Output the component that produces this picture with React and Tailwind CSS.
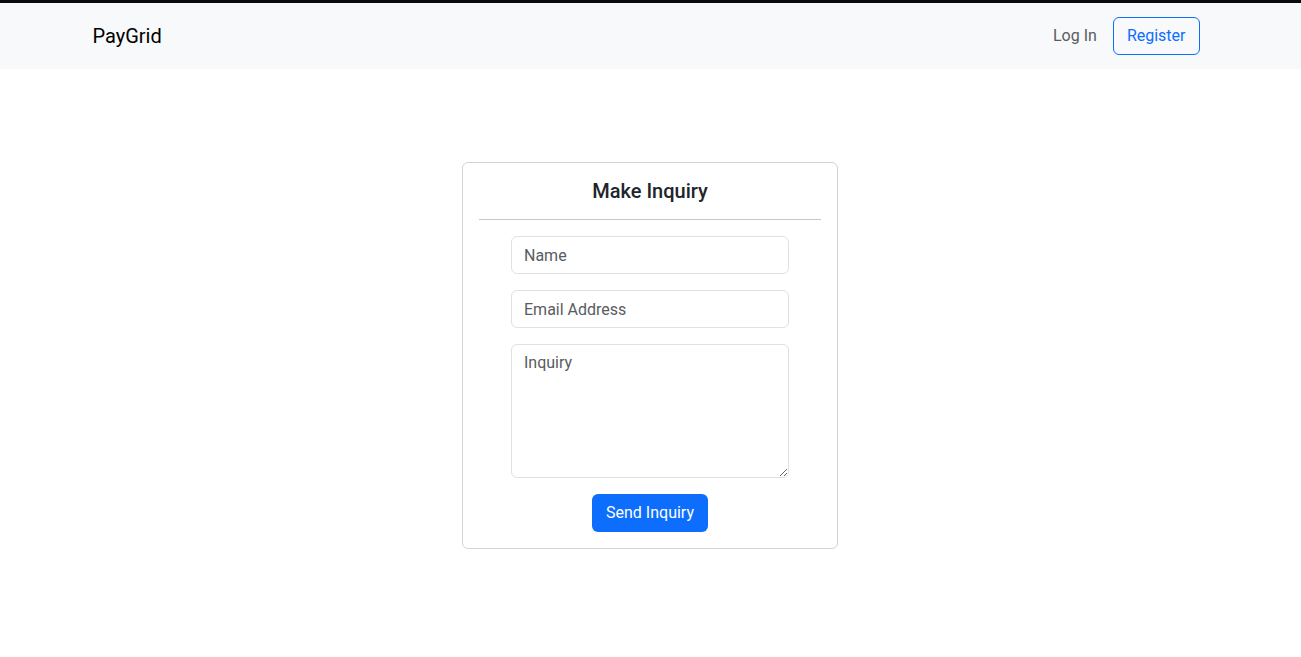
import React, { useState } from 'react';

const App = () => {
  const [form, setForm] = useState({ name: '', email: '', inquiry: '' });

  const handleChange = (e) => {
    setForm(prev => ({ ...prev, [e.target.name]: e.target.value }));
  };

  return (
    <div className="min-h-screen bg-white text-[#212529]" style={{ fontFamily: 'Roboto, sans-serif' }}>
      <div className="h-[3px] bg-[#0b0b0b]" />
      <nav className="bg-[#f8f9fa] h-[66px]">
        <div className="max-w-[1140px] h-full mx-auto px-3 flex items-center justify-between">
          <a href="#" className="text-[20px] text-black leading-none">PayGrid</a>
          <div className="flex items-center gap-4 mr-[9px]">
            <a href="#" className="text-[16px] text-[#595c5f]">Log In</a>
            <button className="h-[38px] px-[13px] border border-[#0d6efd] rounded-[6px] text-[16px] text-[#0d6efd]">
              Register
            </button>
          </div>
        </div>
      </nav>

      <div className="flex justify-center pt-[93px]">
        <div className="w-[376px] mr-[1px] border border-[#d4d4d4] rounded-[6px] p-4">
          <h1 className="text-[20px] font-medium text-center leading-[24px] text-[#212529]">Make Inquiry</h1>
          <hr className="my-4 border-t border-[#c8c8c8]" />
          <form className="flex flex-col items-center gap-4" onSubmit={(e) => e.preventDefault()}>
            <input
              name="name"
              type="text"
              placeholder="Name"
              value={form.name}
              onChange={handleChange}
              className="w-[278px] h-[38px] px-3 border border-[#dee2e6] rounded-[6px] text-[16px] placeholder:text-[#595c5f] focus:outline-none"
            />
            <input
              name="email"
              type="email"
              placeholder="Email Address"
              value={form.email}
              onChange={handleChange}
              className="w-[278px] h-[38px] px-3 border border-[#dee2e6] rounded-[6px] text-[16px] placeholder:text-[#595c5f] focus:outline-none"
            />
            <textarea
              name="inquiry"
              placeholder="Inquiry"
              value={form.inquiry}
              onChange={handleChange}
              className="w-[278px] h-[134px] px-3 py-[6px] border border-[#dee2e6] rounded-[6px] text-[16px] leading-[24px] placeholder:text-[#595c5f] focus:outline-none"
            />
            <button
              type="submit"
              className="h-[38px] px-[14.5px] bg-[#0d6efd] rounded-[6px] text-[16px] text-white"
            >
              Send Inquiry
            </button>
          </form>
        </div>
      </div>
    </div>
  );
};

export default App;
